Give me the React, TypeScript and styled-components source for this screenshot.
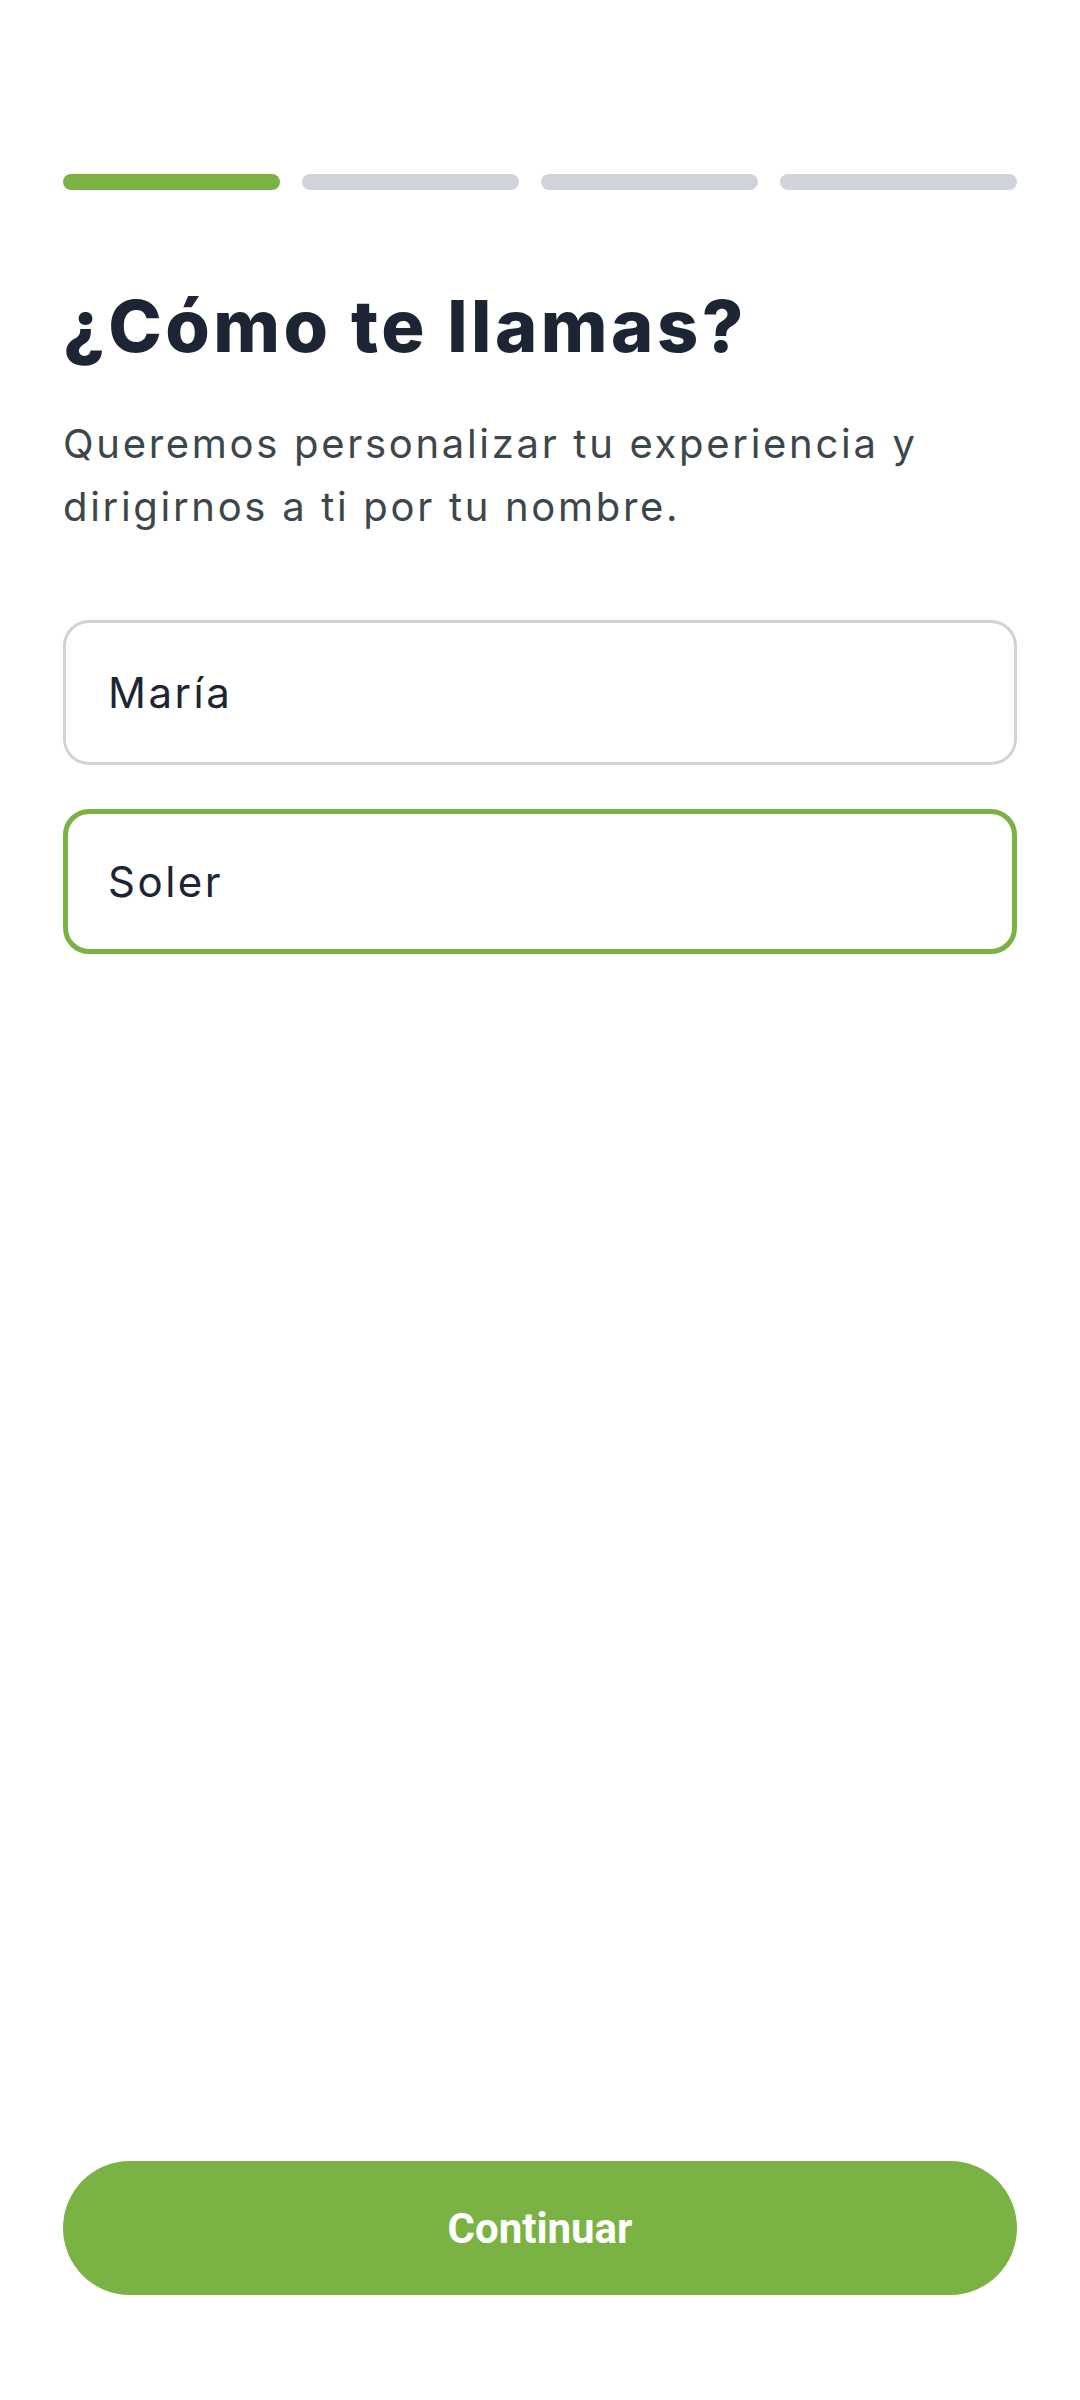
import React from "react";
import styled, { createGlobalStyle } from "styled-components";

const GlobalStyle = createGlobalStyle`
  html, body {
    margin: 0;
    padding: 0;
    background: #ffffff;
  }
  #root {
    min-height: 100vh;
  }
  * { box-sizing: border-box; }
`;

const Page = styled.main`
  min-height: 100vh;
  display: flex;
  flex-direction: column;
  padding: 174px 63px 105px;
  background: #ffffff;
  font-family: Inter, "Noto Sans", sans-serif;
`;

const Progress = styled.div`
  display: grid;
  grid-template-columns: repeat(3, 217px) 1fr;
  gap: 22px;
  width: 954px;
`;

const Segment = styled.div<{ $active?: boolean }>`
  height: 16px;
  border-radius: 8px;
  background: ${(p) => (p.$active ? "#7ab343" : "#cfd4db")};
`;

const Title = styled.h1`
  margin: 92px 0 0;
  font-family: Inter, "Noto Sans", sans-serif;
  font-weight: 800;
  font-size: 72px;
  line-height: 88px;
  letter-spacing: 3.5px;
  color: #1d2433;
`;

const Subtitle = styled.p`
  margin: 42px 0 0;
  font-family: Inter, "Noto Sans", sans-serif;
  font-weight: 400;
  font-size: 40px;
  line-height: 63px;
  letter-spacing: 2.7px;
  color: #3c474c;
`;

const Fields = styled.div`
  display: flex;
  flex-direction: column;
  gap: 44px;
  margin-top: 82px;
  width: 954px;
`;

const Field = styled.input<{ $focused?: boolean }>`
  display: block;
  width: 100%;
  height: 145px;
  padding: 0 ${(p) => (p.$focused ? 40 : 42)}px;
  border: ${(p) => (p.$focused ? "5px solid #7ab343" : "3px solid #cfd4da")};
  border-radius: 26px;
  background: #ffffff;
  font-family: Inter, "Noto Sans", sans-serif;
  font-size: 42px;
  font-weight: 400;
  letter-spacing: 2.5px;
  color: #1d2433;
  outline: none;
`;

const Spacer = styled.div`
  flex: 1;
`;

const PrimaryButton = styled.button`
  display: flex;
  align-items: center;
  justify-content: center;
  width: 954px;
  height: 134px;
  border: none;
  border-radius: 67px;
  background: #7ab343;
  color: #ffffff;
  font-family: Roboto, "Liberation Sans", sans-serif;
  font-weight: 700;
  font-size: 42px;
  cursor: pointer;
`;

export default function App() {
  return (
    <>
      <GlobalStyle />
      <Page>
        <Progress>
          <Segment $active />
          <Segment />
          <Segment />
          <Segment />
        </Progress>
        <Title>¿Cómo te llamas?</Title>
        <Subtitle>
          Queremos personalizar tu experiencia y
          <br />
          dirigirnos a ti por tu nombre.
        </Subtitle>
        <Fields>
          <Field defaultValue="María" />
          <Field $focused defaultValue="Soler" />
        </Fields>
        <Spacer />
        <PrimaryButton>Continuar</PrimaryButton>
      </Page>
    </>
  );
}
